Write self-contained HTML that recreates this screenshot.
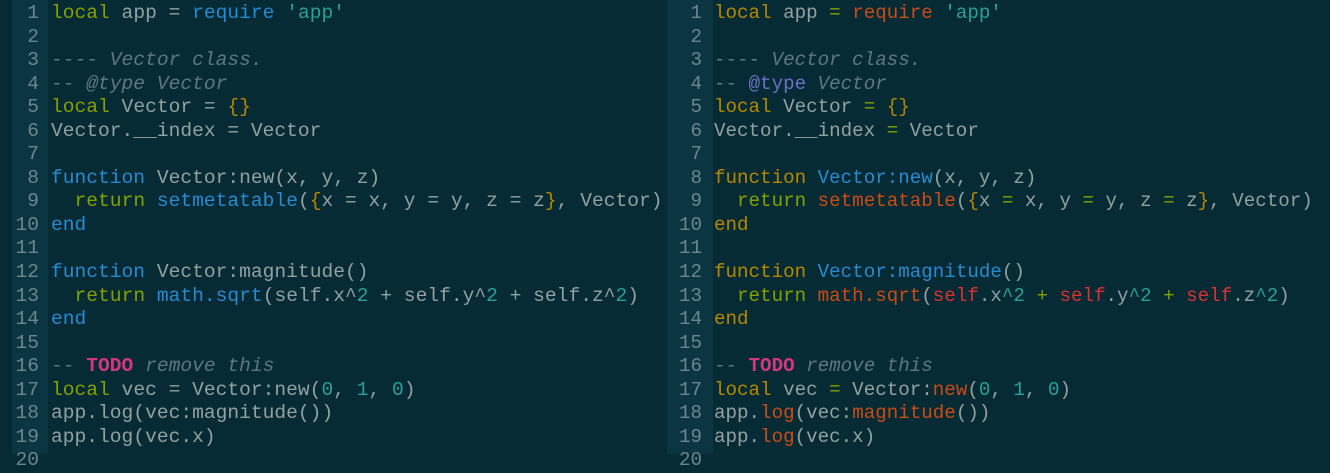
<!DOCTYPE html>
<html><head><meta charset="utf-8"><style>
html,body{margin:0;padding:0;width:1330px;height:454px;overflow:hidden;background:#062b35;}
.pane{position:absolute;top:0;height:454px;background:#062b35;}
.gut{position:absolute;top:0;height:454px;background:#0b3641;}
pre{margin:0;position:absolute;top:2px;font-family:"Liberation Mono",monospace;font-size:19.2px;letter-spacing:0;line-height:23.55px;color:#93a1a1;}
pre.L{font-size:19.6px;}
.ln{color:#6a8790;text-align:right;width:39px;}
.g{color:#85a000}.b{color:#268bd2}.c{color:#2aa198}.y{color:#b58900}.cm{color:#5d7880;font-style:italic}
.t{color:#d33682;font-weight:bold;font-style:normal}.o{color:#cb4b16}.r{color:#dc322f}.v{color:#6c71c4;font-style:normal}
</style></head><body>
<div class="pane" style="left:0;width:665px"></div>
<div class="gut" style="left:12px;width:36px"></div>
<div class="gut" style="left:667px;width:46px"></div>
<pre class="ln L" style="left:0">1
2
3
4
5
6
7
8
9
10
11
12
13
14
15
16
17
18
19
20</pre>
<pre class="L" style="left:51px"><span class="g">local</span> app = <span class="b">require</span> <span class="c">'app'</span>

<span class="cm">---- Vector class.</span>
<span class="cm">-- @type Vector</span>
<span class="g">local</span> Vector = <span class="y">{}</span>
Vector.__index = Vector

<span class="b">function</span> Vector:new(x, y, z)
  <span class="g">return</span> <span class="b">setmetatable</span>(<span class="y">{</span>x = x, y = y, z = z<span class="y">}</span>, Vector)
<span class="b">end</span>

<span class="b">function</span> Vector:magnitude()
  <span class="g">return</span> <span class="b">math.sqrt</span>(self.x^<span class="c">2</span> + self.y^<span class="c">2</span> + self.z^<span class="c">2</span>)
<span class="b">end</span>

<span class="cm">-- <span class="t">TODO</span> remove this</span>
<span class="g">local</span> vec = Vector:new(<span class="c">0</span>, <span class="c">1</span>, <span class="c">0</span>)
app.log(vec:magnitude())
app.log(vec.x)</pre>
<pre class="ln" style="left:663px">1
2
3
4
5
6
7
8
9
10
11
12
13
14
15
16
17
18
19
20</pre>
<pre style="left:714px"><span class="y">local</span> app <span class="g">=</span> <span class="o">require</span> <span class="c">'app'</span>

<span class="cm">---- Vector class.</span>
<span class="cm">-- <span class="v">@type</span> Vector</span>
<span class="y">local</span> Vector <span class="g">=</span> <span class="y">{}</span>
Vector.__index <span class="g">=</span> Vector

<span class="y">function</span> <span class="b">Vector:new</span>(x, y, z)
  <span class="g">return</span> <span class="o">setmetatable</span>(<span class="y">{</span>x <span class="g">=</span> x, y <span class="g">=</span> y, z <span class="g">=</span> z<span class="y">}</span>, Vector)
<span class="y">end</span>

<span class="y">function</span> <span class="b">Vector:magnitude</span>()
  <span class="g">return</span> <span class="o">math.sqrt</span>(<span class="r">self</span>.x<span class="c">^2</span> <span class="g">+</span> <span class="r">self</span>.y<span class="c">^2</span> <span class="g">+</span> <span class="r">self</span>.z<span class="c">^2</span>)
<span class="y">end</span>

<span class="cm">-- <span class="t">TODO</span> remove this</span>
<span class="y">local</span> vec <span class="g">=</span> Vector:<span class="o">new</span>(<span class="c">0</span>, <span class="c">1</span>, <span class="c">0</span>)
app.<span class="o">log</span>(vec:<span class="o">magnitude</span>())
app.<span class="o">log</span>(vec.x)</pre>
</body></html>
